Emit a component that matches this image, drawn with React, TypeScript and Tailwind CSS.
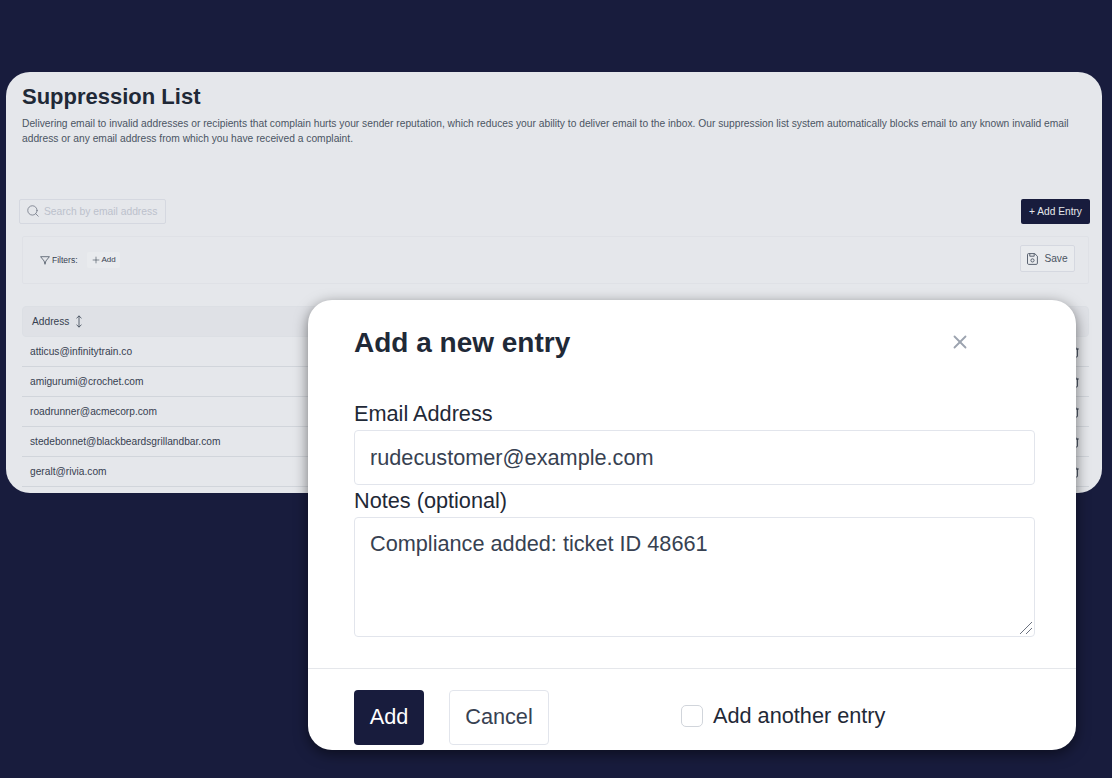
import { Plus, Search, Trash2, X } from "lucide-react";

const addresses = [
  "atticus@infinitytrain.co",
  "amigurumi@crochet.com",
  "roadrunner@acmecorp.com",
  "stedebonnet@blackbeardsgrillandbar.com",
  "geralt@rivia.com",
];

function SortIcon() {
  return (
    <svg width="8" height="13" viewBox="0 0 8 13" fill="none" stroke="#4b5563" strokeWidth="0.9" strokeLinecap="round" strokeLinejoin="round">
      <path d="M4 1v11M1.8 3 4 1l2.2 2M1.8 10 4 12l2.2-2" />
    </svg>
  );
}

function FilterIcon() {
  return (
    <svg width="10" height="9" viewBox="0 0 10 9" fill="none" stroke="#4b5563" strokeWidth="0.8" strokeLinejoin="round">
      <path d="M0.6 0.7h8.8L5.9 5 5 8.3 4.1 5z" />
    </svg>
  );
}

function SaveIcon() {
  return (
    <svg width="11" height="12" viewBox="0 0 11 12" fill="none" stroke="#4b5563" strokeWidth="0.9" strokeLinejoin="round">
      <path d="M1.5 0.6h6.2l2.7 2.6v7a1.2 1.2 0 0 1-1.2 1.2h-7.7A1.2 1.2 0 0 1 .5 10.2V1.6a1 1 0 0 1 1-1z" />
      <path d="M2.8 0.6v2.6h4.4V0.6" />
      <circle cx="5.5" cy="7.4" r="1.6" />
    </svg>
  );
}

function SuppressionList() {
  return (
    <div className="h-[421px] overflow-hidden rounded-[24px] bg-[#e5e7eb]">
      <div className="pl-4 pr-3">
        <h1 className="pt-[11px] text-[22px] leading-[28px] font-bold text-[#1f2937]">Suppression List</h1>
        <p className="mt-[5px] w-[1052px] text-[10.26px] leading-[15px] text-[#4b5563]">
          Delivering email to invalid addresses or recipients that complain hurts your sender reputation, which reduces your ability to deliver email to the inbox. Our suppression list system automatically blocks email to any known invalid email address or any email address from which you have received a complaint.
        </p>
        <div className="mt-[53px] -ml-[3px] flex items-center justify-between">
          <div className="flex h-[25px] w-[147px] items-center gap-[4px] rounded-[2px] border border-[#d5d8e0] pl-[6px]">
            <Search size={14} className="-mt-[2px] text-[#6b7280]" strokeWidth={1.3} />
            <span className="text-[10.3px] text-[#bcc1cc]">Search by email address</span>
          </div>
          <button className="h-[25px] w-[69px] rounded-[2px] bg-[#181c3d] text-[10.2px] text-[#e5e7eb]">+ Add Entry</button>
        </div>
        <div className="mt-3 flex h-[48px] w-[1067px] items-center justify-between rounded-[2px] border border-[#dfe1e6] pr-[13px] pl-[17px]">
          <div className="flex items-center">
            <FilterIcon />
            <span className="ml-[2px] text-[8.5px] text-[#374151]">Filters:</span>
            <div className="ml-[9px] flex h-[16px] items-center gap-[1px] rounded-[2px] bg-[#e9ebee] px-[4px]">
              <Plus size={10} className="text-[#374151]" strokeWidth={1.4} />
              <span className="text-[8px] text-[#374151]">Add</span>
            </div>
          </div>
          <button className="-mt-[3px] flex h-[27px] w-[55px] items-center justify-center gap-[6px] rounded-[2px] border border-[#d5d8e0] bg-[#e9ebee]">
            <SaveIcon />
            <span className="text-[10.2px] text-[#4b5563]">Save</span>
          </button>
        </div>
        <div className="mt-[22px] w-[1067px]">
          <div className="flex h-[31px] items-center gap-[6px] rounded-[4px] border border-[#dcdfe4] bg-[#dfe1e6] pl-[9px]">
            <span className="text-[10.2px] text-[#374151]">Address</span>
            <SortIcon />
          </div>
          {addresses.map((address) => (
            <div key={address} className="flex h-[30px] items-center justify-between border-b border-[#d1d5db] pr-[9px] pl-[8px]">
              <span className="text-[10.2px] text-[#374151]">{address}</span>
              <Trash2 size={12} className="text-[#374151]" strokeWidth={1.7} />
            </div>
          ))}
        </div>
      </div>
    </div>
  );
}

function AddEntryModal() {
  return (
    <div className="absolute top-[300px] left-[308px] h-[450px] w-[768px] overflow-hidden rounded-[24px] bg-white shadow-[0_4px_14px_rgba(0,0,0,0.5)]">
      <div className="flex items-center justify-between pt-[25px] pr-[105px] pl-[46px]">
        <h2 className="text-[28px] leading-[36px] font-bold text-[#1f2937]">Add a new entry</h2>
        <X size={22} className="-mt-[3px] text-[#9ca3af]" strokeWidth={2} />
      </div>
      <div className="mt-[37px] w-[727px] pl-[46px]">
        <label className="block text-[21.7px] leading-[32px] text-[#1f2937]">Email Address</label>
        <div className="flex h-[55px] items-center rounded-[4px] border border-[#e2e5ec] pt-[2px] pl-[15px] text-[21.7px] text-[#374151]">
          rudecustomer@example.com
        </div>
        <label className="-mt-[1px] block text-[21.7px] leading-[33px] text-[#1f2937]">Notes (optional)</label>
        <div className="relative h-[120px] rounded-[4px] border border-[#e2e5ec] pt-[11px] pl-[15px] text-[21.7px] leading-[30px] text-[#374151]">
          Compliance added: ticket ID 48661
          <svg className="absolute right-[1px] bottom-[1px]" width="14" height="14" viewBox="0 0 14 14" stroke="#6b7280" strokeWidth="1" fill="none">
            <path d="M1 13 13 1M7 13 13 7" />
          </svg>
        </div>
      </div>
      <div className="mt-[31px] flex border-t border-[#e5e7eb] pt-[21px] pl-[46px]">
        <button className="h-[55px] w-[70px] rounded-[4px] bg-[#181c3d] text-[21.7px] text-white">Add</button>
        <button className="ml-[25px] h-[55px] w-[100px] rounded-[4px] border border-[#e2e5ec] text-[21.7px] text-[#374151]">Cancel</button>
        <label className="ml-[132px] flex h-[52px] items-center gap-[10px]">
          <span className="h-[22px] w-[22px] rounded-[5px] border border-[#d1d5db] bg-white" />
          <span className="text-[21.7px] text-[#1f2937]">Add another entry</span>
        </label>
      </div>
    </div>
  );
}

export default function App() {
  return (
    <div className="relative h-[778px] w-[1112px] overflow-hidden bg-[#181c3d] pt-[72px] pr-[10px] pl-[6px] font-['Liberation_Sans',Arial,sans-serif]">
      <SuppressionList />
      <AddEntryModal />
    </div>
  );
}
